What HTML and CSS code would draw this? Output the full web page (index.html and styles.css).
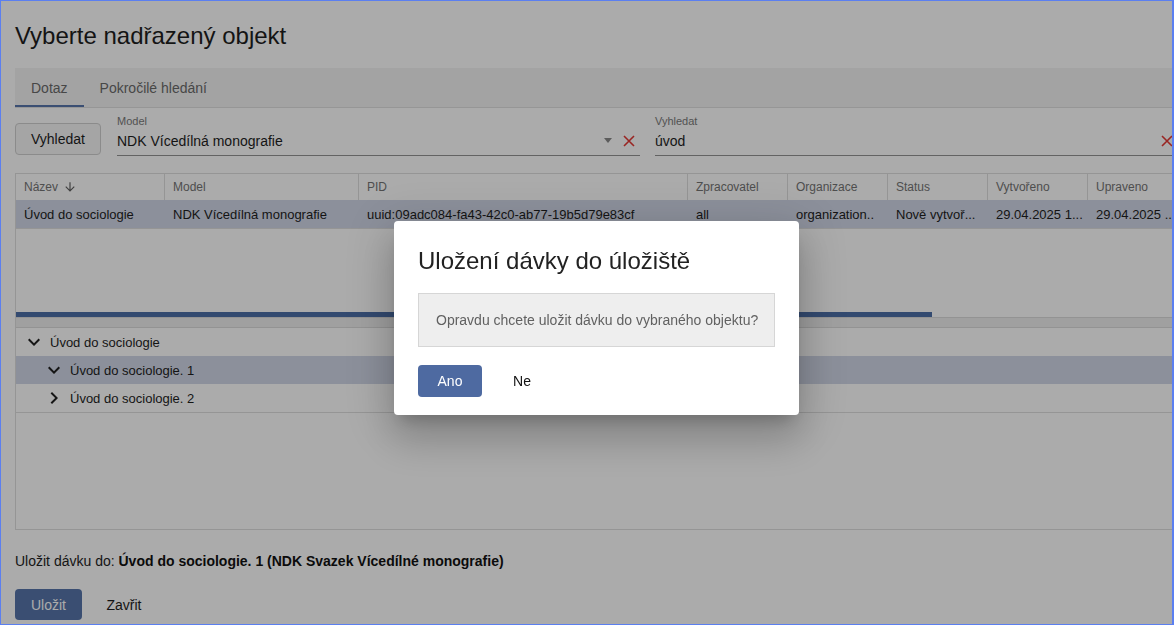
FILE: index.html
```html
<!DOCTYPE html>
<html lang="cs">
<head>
<meta charset="utf-8">
<title>Vyberte nadřazený objekt</title>
<link rel="stylesheet" href="styles.css">
</head>
<body>
<div class="page">
  <h1 class="title">Vyberte nadřazený objekt</h1>
  <div class="tabs">
    <div class="tab active">Dotaz</div>
    <div class="tab">Pokročilé hledání</div>
  </div>
  <div class="search-row">
    <button class="btn-outline">Vyhledat</button>
    <div class="field field-model">
      <div class="field-label">Model</div>
      <div class="field-control">
        <span class="field-value">NDK Vícedílná monografie</span>
        <span class="caret"></span>
        <svg class="clear" width="12" height="12" viewBox="0 0 12 12"><path d="M1 1L11 11M11 1L1 11" stroke="#e53935" stroke-width="1.6" fill="none"/></svg>
      </div>
    </div>
    <div class="field field-search">
      <div class="field-label">Vyhledat</div>
      <div class="field-control">
        <span class="field-value">úvod</span>
        <svg class="clear" width="12" height="12" viewBox="0 0 12 12"><path d="M1 1L11 11M11 1L1 11" stroke="#e53935" stroke-width="1.6" fill="none"/></svg>
      </div>
    </div>
  </div>

  <div class="results">
    <div class="thead">
      <div class="th c1">Název
        <svg class="sort" width="14" height="14" viewBox="0 0 24 24"><path d="M20 12l-1.41-1.41L13 16.17V4h-2v12.17l-5.58-5.59L4 12l8 8 8-8z" fill="#616161"/></svg>
      </div>
      <div class="th c2">Model</div>
      <div class="th c3">PID</div>
      <div class="th c4">Zpracovatel</div>
      <div class="th c4">Organizace</div>
      <div class="th c4">Status</div>
      <div class="th c4">Vytvořeno</div>
      <div class="th c4">Upraveno</div>
    </div>
    <div class="tr">
      <div class="td c1">Úvod do sociologie</div>
      <div class="td c2">NDK Vícedílná monografie</div>
      <div class="td c3">uuid:09adc084-fa43-42c0-ab77-19b5d79e83cf</div>
      <div class="td c4">all</div>
      <div class="td c4">organization..</div>
      <div class="td c4">Nově vytvoř...</div>
      <div class="td c4">29.04.2025 1...</div>
      <div class="td c4">29.04.2025 ...</div>
    </div>
    <div class="tbody-space"></div>
    <div class="hscroll"></div>
    <div class="splitter"></div>
    <div class="tree">
      <div class="node lvl1">
        <svg class="chev" width="24" height="24" viewBox="0 0 24 24"><path d="M16.59 8.59L12 13.17 7.41 8.59 6 10l6 6 6-6z" fill="#202020"/></svg>
        <span>Úvod do sociologie</span>
      </div>
      <div class="node lvl2 selected">
        <svg class="chev" width="24" height="24" viewBox="0 0 24 24"><path d="M16.59 8.59L12 13.17 7.41 8.59 6 10l6 6 6-6z" fill="#202020"/></svg>
        <span>Úvod do sociologie. 1</span>
      </div>
      <div class="node lvl2">
        <svg class="chev" width="24" height="24" viewBox="0 0 24 24"><path d="M10 6L8.59 7.41 13.17 12l-4.58 4.59L10 18l6-6z" fill="#202020"/></svg>
        <span>Úvod do sociologie. 2</span>
      </div>
    </div>
    <div class="tree-space"></div>
  </div>

  <div class="target">Uložit dávku do: <b>Úvod do sociologie. 1 (NDK Svazek Vícedílné monografie)</b></div>
  <div class="actions">
    <button class="btn-primary btn-save">Uložit</button>
    <button class="btn-text btn-close">Zavřit</button>
  </div>
</div>

<div class="backdrop"></div>

<div class="dialog">
  <h2 class="dlg-title">Uložení dávky do úložiště</h2>
  <div class="dlg-msg">Opravdu chcete uložit dávku do vybraného objektu?</div>
  <div class="dlg-actions">
    <button class="btn-primary">Ano</button>
    <button class="btn-text btn-no">Ne</button>
  </div>
</div>

<div class="frame"></div>
</body>
</html>
```

FILE: styles.css
```css
* { box-sizing: border-box; }
html, body { margin: 0; padding: 0; }
body {
  width: 1174px;
  height: 625px;
  overflow: hidden;
  position: relative;
  background: #ffffff;
  color: #212121;
  font-family: "Liberation Sans", Arial, sans-serif;
}
button { font-family: inherit; cursor: pointer; }

.page {
  width: 1178px;
  padding-left: 15px;
}

.title {
  margin: 20px 0 16px;
  font-size: 24px;
  line-height: 32px;
  font-weight: normal;
  color: #1e1e1e;
}

.tabs {
  display: flex;
  height: 40px;
  background: #f4f4f4;
  border-bottom: 1px solid #e0e0e0;
}
.tab {
  display: flex;
  align-items: center;
  padding: 0 16px;
  font-size: 14px;
  color: #6b6b6b;
  border-top: 2px solid transparent;
  border-bottom: 2px solid transparent;
}
.tab.active { border-bottom-color: #5876ac; }

.search-row {
  display: flex;
  align-items: flex-end;
  margin-top: 7px;
}
.btn-outline {
  width: 86px;
  height: 32px;
  margin-bottom: 1px;
  border: 1px solid #cfcfcf;
  border-radius: 4px;
  background: #f7f7f7;
  font-size: 14px;
  color: #1e1e1e;
  padding: 0;
}
.field {
  display: flex;
  flex-direction: column;
  border-bottom: 1px solid #949494;
}
.field-model { width: 523px; margin-left: 16px; }
.field-search { flex: 1; margin-left: 15px; }
.field-label {
  height: 13px;
  font-size: 11px;
  line-height: 13px;
  color: #7a7a7a;
}
.field-control {
  display: flex;
  align-items: center;
  height: 27px;
  padding-bottom: 2px;
  font-size: 14px;
  color: #1e1e1e;
}
.field-value { flex: 1; }
.caret {
  width: 0;
  height: 0;
  border-left: 4px solid transparent;
  border-right: 4px solid transparent;
  border-top: 5px solid #8a8a8a;
  margin-right: 11px;
}
.clear { margin-right: 5px; flex: none; }

.results {
  margin-top: 17px;
  border: 1px solid #dedede;
}
.thead { display: flex; height: 26px; }
.th {
  display: flex;
  align-items: center;
  padding-left: 8px;
  font-size: 12px;
  color: #757575;
  border-right: 1px solid #dedede;
  flex: none;
}
.sort { margin-left: 5px; }
.c1 { width: 149px; }
.c2 { width: 194px; }
.c3 { width: 329px; }
.c4 { width: 100px; }
.tr {
  display: flex;
  height: 29px;
  background: #d1d7e7;
  border-bottom: 1px solid #dedede;
}
.td {
  display: flex;
  align-items: center;
  padding-left: 8px;
  font-size: 13px;
  color: #1e1e1e;
  white-space: nowrap;
  overflow: hidden;
  flex: none;
}
.tbody-space { height: 83px; }
.hscroll { width: 916px; height: 5px; background: #4c6fa7; }
.splitter {
  height: 11px;
  background: #efefef;
  border-top: 1px solid #dcdcdc;
  border-bottom: 1px solid #dcdcdc;
}
.tree { display: flex; flex-direction: column; }
.node {
  display: flex;
  align-items: center;
  height: 28px;
  font-size: 13px;
  color: #1e1e1e;
}
.node.selected { background: #d1d7e7; }
.node.lvl1 .chev { margin-left: 6px; margin-right: 4px; }
.node.lvl2 .chev { margin-left: 26px; margin-right: 4px; }
.tree-space { height: 117px; border-top: 1px solid #dedede; }

.target {
  margin-top: 21px;
  font-size: 14px;
  line-height: 20px;
  color: #1e1e1e;
}
.target b { color: #111111; }

.actions { display: flex; margin-top: 18px; }
.btn-primary {
  height: 32px;
  min-width: 64px;
  padding: 0 14px;
  border: none;
  border-radius: 4px;
  background: #4e6aa1;
  color: #ffffff;
  font-size: 14px;
}
.btn-save { width: 67px; height: 31px; background: #5775aa; padding: 0; }
.btn-text {
  height: 32px;
  min-width: 64px;
  padding: 0 8px;
  border: none;
  background: transparent;
  color: #1e1e1e;
  font-size: 14px;
}
.btn-close { margin-left: 10px; height: 31px; }
.btn-no { margin-left: 8px; color: #111111; }

.backdrop {
  position: fixed;
  inset: 0;
  background: rgba(0, 0, 0, 0.33);
}

.dialog {
  position: absolute;
  left: 394px;
  top: 221px;
  width: 405px;
  padding: 24px 24px 18px;
  background: #ffffff;
  border-radius: 4px;
  box-shadow: 0 11px 15px -7px rgba(0,0,0,.2), 0 24px 38px 3px rgba(0,0,0,.14), 0 9px 46px 8px rgba(0,0,0,.12);
}
.dlg-title {
  margin: 0 0 16px;
  font-size: 24px;
  line-height: 32px;
  font-weight: normal;
  color: #222222;
}
.dlg-msg {
  display: flex;
  align-items: center;
  height: 54px;
  padding: 0 0 0 17px;
  background: #eeeeee;
  border: 1px solid #d6d6d6;
  font-size: 14px;
  color: #616161;
  white-space: nowrap;
  overflow: hidden;
}
.dlg-actions { display: flex; margin-top: 18px; }

.frame {
  position: fixed;
  inset: 0;
  border: 1px solid #5b7ff0;
  border-right-width: 2px;
  pointer-events: none;
}
```
